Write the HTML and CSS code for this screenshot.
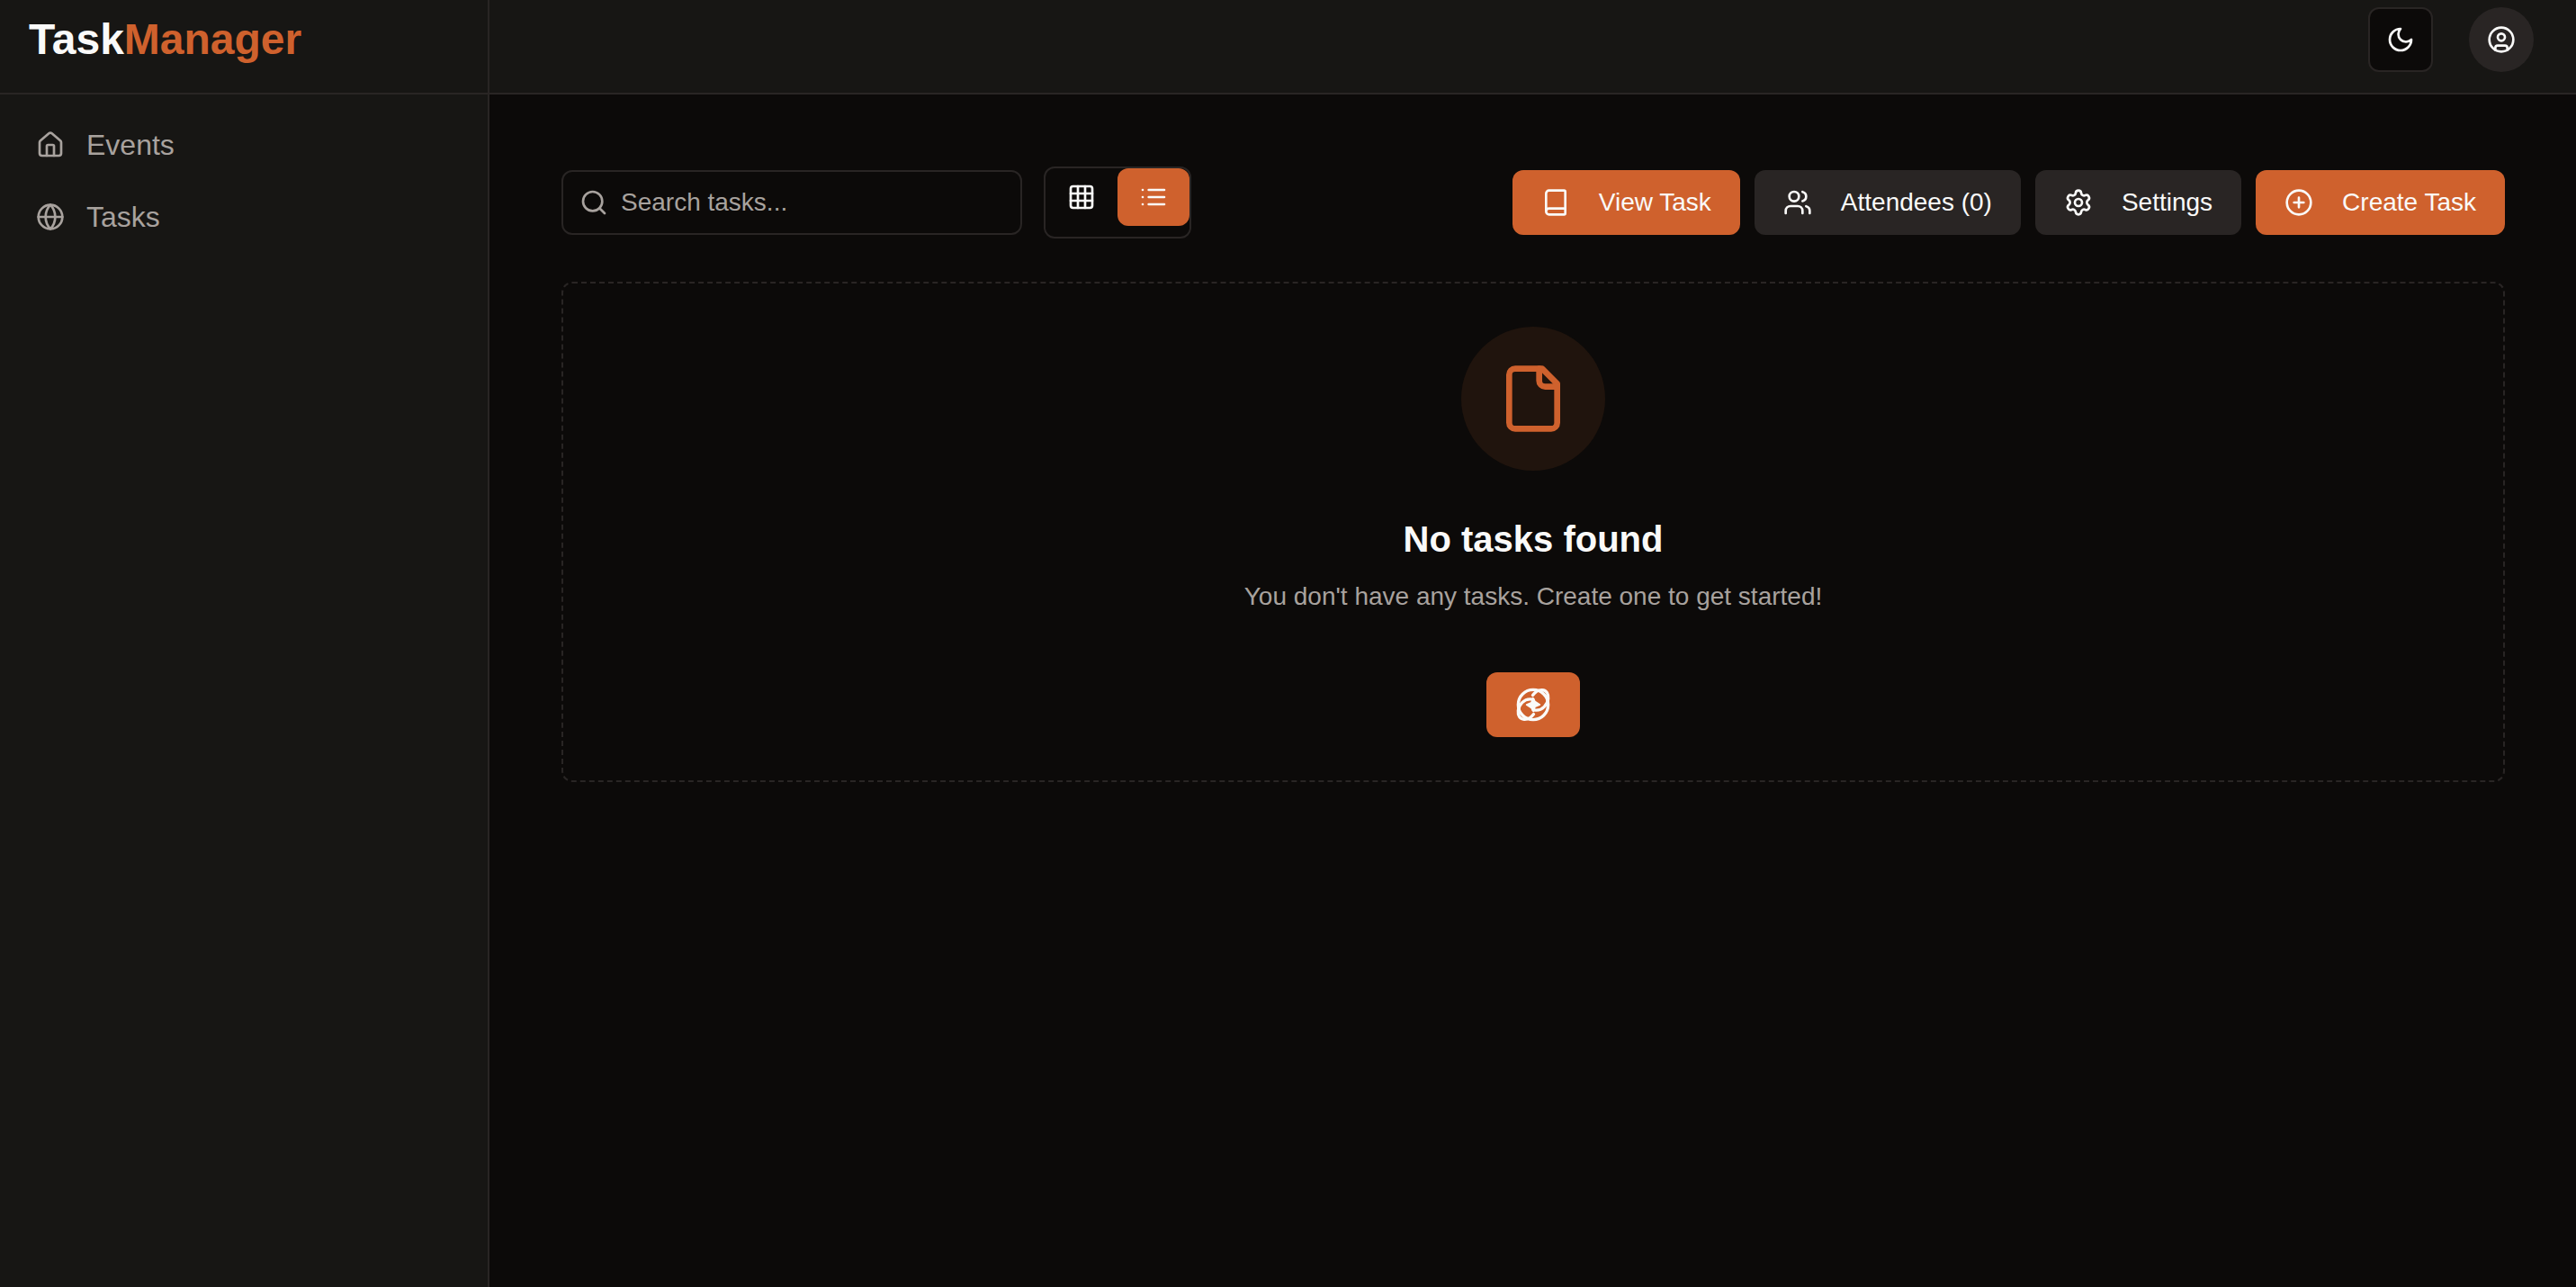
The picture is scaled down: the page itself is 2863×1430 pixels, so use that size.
FILE: index.html
```html
<!DOCTYPE html>
<html lang="en">
<head>
<meta charset="utf-8">
<meta name="viewport" content="width=device-width, initial-scale=1">
<title>TaskManager</title>
<link rel="stylesheet" href="styles.css">
</head>
<body>
<div class="app">
  <aside class="sidebar">
    <div class="brand"><a class="brand-link" href="#">Task<span class="brand-accent">Manager</span></a></div>
    <nav class="nav" aria-label="Main">
      <a class="nav-link" href="#">
        <svg class="icon" viewBox="0 0 24 24" aria-hidden="true"><path d="M15 21v-8a1 1 0 0 0-1-1h-4a1 1 0 0 0-1 1v8"/><path d="M3 10a2 2 0 0 1 .709-1.528l7-5.999a2 2 0 0 1 2.582 0l7 5.999A2 2 0 0 1 21 10v9a2 2 0 0 1-2 2H5a2 2 0 0 1-2-2z"/></svg>
        <span>Events</span>
      </a>
      <a class="nav-link" href="#">
        <svg class="icon" viewBox="0 0 24 24" aria-hidden="true"><circle cx="12" cy="12" r="10"/><path d="M12 2a14.5 14.5 0 0 0 0 20 14.5 14.5 0 0 0 0-20"/><path d="M2 12h20"/></svg>
        <span>Tasks</span>
      </a>
    </nav>
  </aside>
  <div class="page">
    <header class="topbar">
      <button class="theme-button" type="button" aria-label="Toggle theme">
        <svg class="icon" viewBox="0 0 24 24" aria-hidden="true"><path d="M12 3a6 6 0 0 0 9 9 9 9 0 1 1-9-9Z"/></svg>
      </button>
      <button class="avatar-button" type="button" aria-label="Account">
        <svg class="icon" viewBox="0 0 24 24" aria-hidden="true"><circle cx="12" cy="12" r="10"/><circle cx="12" cy="10" r="3"/><path d="M7 20.662V19a2 2 0 0 1 2-2h6a2 2 0 0 1 2 2v1.662"/></svg>
      </button>
    </header>
    <main class="content">
      <div class="toolbar">
        <div class="filters">
          <label class="search">
            <svg class="icon" viewBox="0 0 24 24" aria-hidden="true"><circle cx="11" cy="11" r="8"/><path d="m21 21-4.300-4.300"/></svg>
            <input class="search-input" type="text" placeholder="Search tasks..." aria-label="Search tasks">
          </label>
          <div class="view-toggle" role="group" aria-label="View">
            <button class="toggle" type="button" aria-label="Grid view" aria-pressed="false">
              <svg class="icon" viewBox="0 0 24 24" aria-hidden="true"><rect width="18" height="18" x="3" y="3" rx="2"/><path d="M3 9h18M3 15h18M9 3v18M15 3v18"/></svg>
            </button>
            <button class="toggle toggle-on" type="button" aria-label="List view" aria-pressed="true">
              <svg class="icon" viewBox="0 0 24 24" aria-hidden="true"><path d="M3 6h.01M3 12h.01M3 18h.01M8 6h13M8 12h13M8 18h13"/></svg>
            </button>
          </div>
        </div>
        <div class="actions">
          <button class="button button-primary" type="button">
            <svg class="icon" viewBox="0 0 24 24" aria-hidden="true"><path d="M4 19.500v-15A2.500 2.500 0 0 1 6.500 2H19a1 1 0 0 1 1 1v18a1 1 0 0 1-1 1H6.500a1 1 0 0 1 0-5H20"/></svg>
            <span>View Task</span>
          </button>
          <button class="button button-secondary" type="button">
            <svg class="icon" viewBox="0 0 24 24" aria-hidden="true"><path d="M16 21v-2a4 4 0 0 0-4-4H6a4 4 0 0 0-4 4v2"/><circle cx="9" cy="7" r="4"/><path d="M22 21v-2a4 4 0 0 0-3-3.870M16 3.130a4 4 0 0 1 0 7.750"/></svg>
            <span>Attendees (0)</span>
          </button>
          <button class="button button-secondary" type="button">
            <svg class="icon" viewBox="0 0 24 24" aria-hidden="true"><path d="M9.671 4.136a2.340 2.340 0 0 1 4.659 0 2.340 2.340 0 0 0 3.319 1.915 2.340 2.340 0 0 1 2.330 4.033 2.340 2.340 0 0 0 0 3.831 2.340 2.340 0 0 1-2.330 4.033 2.340 2.340 0 0 0-3.319 1.915 2.340 2.340 0 0 1-4.659 0 2.340 2.340 0 0 0-3.320-1.915 2.340 2.340 0 0 1-2.330-4.033 2.340 2.340 0 0 0 0-3.831A2.340 2.340 0 0 1 6.350 6.051a2.340 2.340 0 0 0 3.319-1.915"/><circle cx="12" cy="12" r="3"/></svg>
            <span>Settings</span>
          </button>
          <button class="button button-primary" type="button">
            <svg class="icon" viewBox="0 0 24 24" aria-hidden="true"><circle cx="12" cy="12" r="10"/><path d="M8 12h8M12 8v8"/></svg>
            <span>Create Task</span>
          </button>
        </div>
      </div>
      <section class="empty">
        <div class="empty-badge">
          <svg class="icon icon-large" viewBox="0 0 24 24" aria-hidden="true"><path d="M15 2H6a2 2 0 0 0-2 2v16a2 2 0 0 0 2 2h12a2 2 0 0 0 2-2V7Z"/><path d="M14 2v4a2 2 0 0 0 2 2h4"/></svg>
        </div>
        <h1 class="empty-title">No tasks found</h1>
        <p class="empty-text">You don't have any tasks. Create one to get started!</p>
        <button class="button button-primary" type="button" aria-label="Create task">
          <svg class="icon icon-medium" viewBox="0 0 24 24" aria-hidden="true">
            <circle cx="12" cy="12" r="10"/>
            <path d="M11.700 5.700C13.500 3.300 15.500 2 18 2.200c3 .2 4.300 2.500 4 5.800-.4 4-4 7.800-8 7.700l-2-.2"/>
            <path d="M12.300 18.300C10.500 20.700 8.500 22 6 21.800c-3-.2-4.300-2.500-4-5.800.4-4 4-7.800 8-7.700l2 .2"/>
            <path fill="currentColor" stroke-width="1" d="M11.800 7.500l1.400 2.300 3.200 2.200-3.200 1.400-1 3.100-1.400-2.300L7.600 12l3.200-1.400z"/>
          </svg>
        </button>
      </section>
    </main>
  </div>
</div>
</body>
</html>
```
FILE: styles.css
```css
:root {
  --background: #0c0a09;
  --panel: #171614;
  --border: #292524;
  --secondary: #292524;
  --primary: #cf612d;
  --primary-soft: #20140d;
  --text: #fafaf9;
  --muted: #a8a29e;
  --radius: 12px;
}

* {
  box-sizing: border-box;
}

body {
  margin: 0;
  background: var(--background);
  color: var(--text);
  font-family: "Liberation Sans", Arial, sans-serif;
  font-size: 28px;
  line-height: 40px;
}

button,
input {
  font: inherit;
  color: inherit;
}

button {
  padding: 0;
  border: 0;
  background: none;
  cursor: pointer;
}

a {
  color: inherit;
  text-decoration: none;
}

.icon {
  flex: none;
  width: 32px;
  height: 32px;
  fill: none;
  stroke: currentColor;
  stroke-width: 2;
  stroke-linecap: round;
  stroke-linejoin: round;
}

.icon-medium {
  width: 40px;
  height: 40px;
}

.icon-large {
  width: 80px;
  height: 80px;
}

.app {
  display: grid;
  grid-template-columns: 544px 1fr;
  min-height: 100vh;
}

.sidebar {
  border-right: 2px solid var(--border);
  background: var(--panel);
}

.brand,
.topbar {
  display: flex;
  height: 105px;
  border-bottom: 2px solid var(--border);
  background: var(--panel);
}

.brand {
  padding: 12px 32px;
}

.brand-link {
  font-size: 48px;
  font-weight: 700;
  line-height: 64px;
}

.brand-accent {
  color: var(--primary);
}

.nav {
  padding: 16px;
}

.nav-link {
  display: flex;
  align-items: center;
  gap: 24px;
  height: 80px;
  padding: 0 24px;
  color: var(--muted);
  font-size: 32px;
}

.topbar {
  justify-content: flex-end;
  gap: 40px;
  padding: 8px 47px;
}

.theme-button,
.avatar-button {
  display: flex;
  align-items: center;
  justify-content: center;
  width: 72px;
  height: 72px;
}

.theme-button {
  border: 2px solid var(--border);
  border-radius: var(--radius);
  background: var(--background);
}

.avatar-button {
  border-radius: 50%;
  background: var(--secondary);
}

.content {
  padding: 80px 79px 80px 80px;
}

.toolbar {
  display: flex;
  align-items: center;
  justify-content: space-between;
  gap: 16px;
  margin-bottom: 48px;
}

.filters {
  display: flex;
  align-items: center;
  gap: 24px;
}

.search {
  display: flex;
  align-items: center;
  gap: 14px;
  width: 512px;
  height: 72px;
  padding: 0 18px;
  border: 2px solid var(--border);
  border-radius: var(--radius);
  color: var(--muted);
}

.search-input {
  flex: 1;
  min-width: 0;
  padding: 0;
  border: 0;
  outline: 0;
  background: none;
  color: var(--text);
}

.search-input::placeholder {
  color: var(--muted);
  opacity: 1;
}

.view-toggle {
  display: flex;
  align-items: flex-start;
  height: 80px;
  border: 2px solid var(--border);
  border-radius: var(--radius);
}

.toggle {
  display: flex;
  align-items: center;
  justify-content: center;
  width: 80px;
  height: 64px;
  border-radius: var(--radius);
}

.toggle-on {
  background: var(--primary);
}

.actions {
  display: flex;
  gap: 16px;
}

.button {
  display: flex;
  align-items: center;
  gap: 32px;
  height: 72px;
  padding: 0 32px;
  border-radius: var(--radius);
  white-space: nowrap;
}

.button-primary {
  background: var(--primary);
}

.button-secondary {
  background: var(--secondary);
}

.empty {
  display: flex;
  flex-direction: column;
  align-items: center;
  padding: 48px;
  border: 2px dashed var(--border);
  border-radius: var(--radius);
}

.empty-badge {
  display: flex;
  align-items: center;
  justify-content: center;
  width: 160px;
  height: 160px;
  border-radius: 50%;
  background: var(--primary-soft);
  color: var(--primary);
}

.empty-title {
  margin: 48px 0 16px;
  font-size: 40px;
  font-weight: 700;
  line-height: 56px;
}

.empty-text {
  margin: 0 0 64px;
  color: var(--muted);
}
```
